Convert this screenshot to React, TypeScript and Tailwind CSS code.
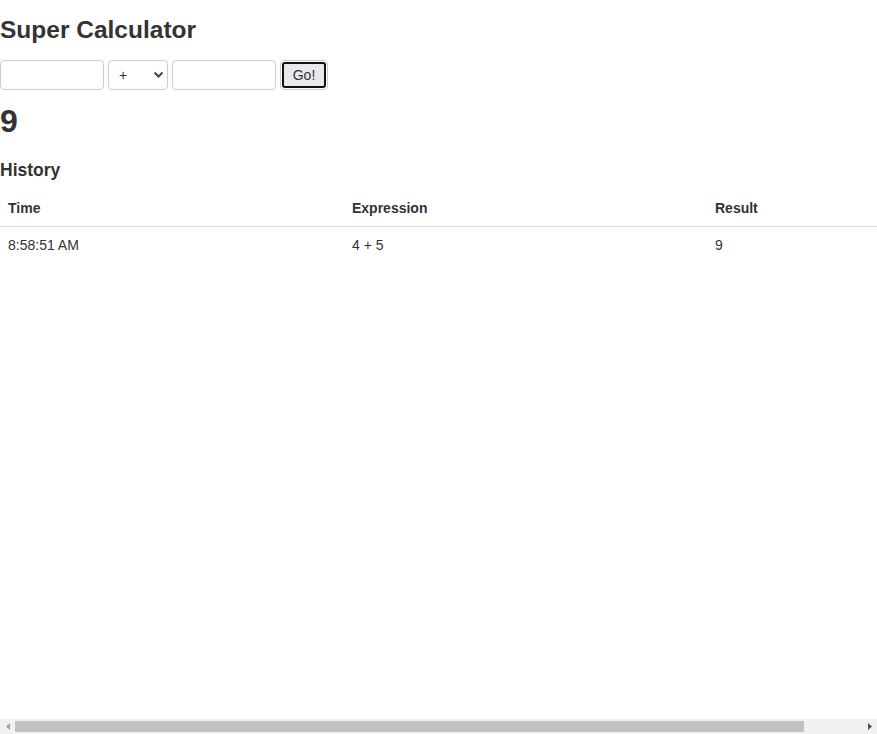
import { useState } from 'react';

type Entry = { time: string; expression: string; result: string };

const HISTORY: Entry[] = [{ time: '8:58:51 AM', expression: '4 + 5', result: '9' }];

export default function App() {
  const [left, setLeft] = useState('');
  const [op, setOp] = useState('+');
  const [right, setRight] = useState('');

  return (
    <div className="flex h-screen w-full flex-col bg-white">
      <div className="flex-1 overflow-hidden">
        <div className="w-[948px] text-[#333] font-['Liberation_Sans',Arial,sans-serif]">
          <h2 className="pt-[16px] text-[24.5px] leading-[28px] font-bold">Super Calculator</h2>

          <div className="mt-[16px] flex h-[30px] items-center gap-1">
            <input
              value={left}
              onChange={e => setLeft(e.target.value)}
              className="h-[30px] w-[104px] rounded-[4px] border border-[#ccc] px-2 text-[14px] outline-none"
            />
            <div className="relative h-[30px] w-[60px]">
              <select
                value={op}
                onChange={e => setOp(e.target.value)}
                className="h-[30px] w-[60px] appearance-none rounded-[4px] border border-[#ccc] bg-white pl-[10px] text-[14px] text-[#333] outline-none"
              >
                <option>+</option>
                <option>-</option>
                <option>*</option>
                <option>/</option>
              </select>
              <svg
                className="pointer-events-none absolute right-[4px] top-[11px]"
                width="11"
                height="8"
                viewBox="0 0 11 8"
                fill="none"
              >
                <path d="M1.5 1.5l4 4 4-4" stroke="#444" strokeWidth="2" />
              </svg>
            </div>
            <input
              value={right}
              onChange={e => setRight(e.target.value)}
              className="h-[30px] w-[104px] rounded-[4px] border border-[#ccc] px-2 text-[14px] outline-none"
            />
            <span className="flex h-[30px] w-[48px] rounded-[4px] border border-[#ccc] p-px">
              <button className="flex-1 rounded-[3px] border-2 border-[#111] bg-[#e9e9ed] text-[14px] text-[#333]">
                Go!
              </button>
            </span>
          </div>

          <h1 className="mt-[13px] text-[32px] leading-[37px] font-bold">9</h1>

          <h3 className="mt-[20px] text-[17.5px] leading-[21px] font-bold">History</h3>

          <table className="mt-[9px] w-full table-fixed border-collapse text-left text-[14px] leading-[20px]">
            <colgroup>
              <col className="w-[344px]" />
              <col className="w-[363px]" />
              <col />
            </colgroup>
            <thead>
              <tr className="border-b border-[#ddd]">
                <th className="px-2 py-2 font-bold">Time</th>
                <th className="px-2 py-2 font-bold">Expression</th>
                <th className="px-2 py-2 font-bold">Result</th>
              </tr>
            </thead>
            <tbody>
              {HISTORY.map(h => (
                <tr key={h.time}>
                  <td className="px-2 py-2">{h.time}</td>
                  <td className="px-2 py-2">{h.expression}</td>
                  <td className="px-2 py-2">{h.result}</td>
                </tr>
              ))}
            </tbody>
          </table>
        </div>
      </div>

      {/* horizontal scrollbar */}
      <div className="flex h-[15px] shrink-0 items-center bg-[#f1f1f1]">
        <div className="flex w-[15px] justify-center">
          <svg width="4" height="7" viewBox="0 0 4 7">
            <path d="M4 0v7L0 3.5z" fill="#a3a3a3" />
          </svg>
        </div>
        <div className="h-[11px] w-[789px] bg-[#c1c1c1]" />
        <div className="flex-1" />
        <div className="flex w-[15px] justify-center">
          <svg width="4" height="7" viewBox="0 0 4 7">
            <path d="M0 0v7l4-3.5z" fill="#505050" />
          </svg>
        </div>
      </div>
    </div>
  );
}
